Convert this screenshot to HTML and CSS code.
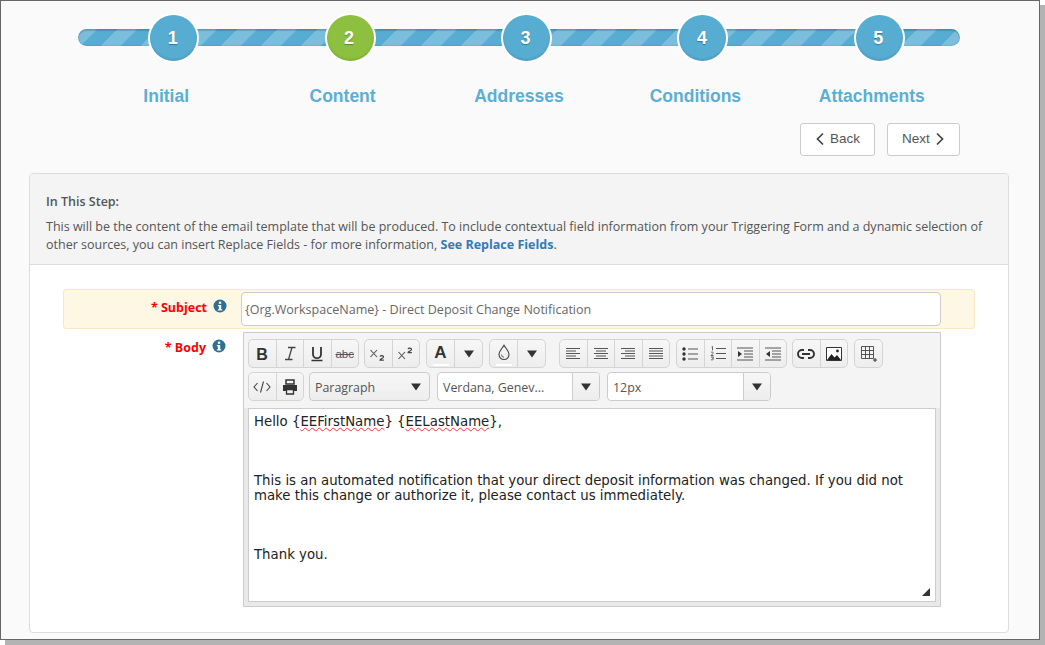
FILE: index.html
```html
<!DOCTYPE html>
<html lang="en">
<head>
<meta charset="utf-8">
<title>Email template - Content</title>
<link rel="stylesheet" href="styles.css">
</head>
<body>
<svg class="defs" width="0" height="0" aria-hidden="true">
  <symbol id="info" viewBox="0 0 14 14"><circle cx="7" cy="7" r="6.5" fill="#2f6f94"/><rect x="5.9" y="2.6" width="2.3" height="2.2" fill="#fff"/><path d="M4.9 6h3.3v4.2h1v1.2H4.900v-1.200h1V7.200h-1z" fill="#fff"/></symbol>
  <symbol id="caret" viewBox="0 0 10 8"><path d="M0 .5h10L5 7.500z" fill="#333"/></symbol>
</svg>
<div class="window">
  <div class="stepper">
    <div class="track"></div>
    <div class="step"><span class="dot">1</span><span class="step-label">Initial</span></div>
    <div class="step"><span class="dot dot-on">2</span><span class="step-label">Content</span></div>
    <div class="step"><span class="dot">3</span><span class="step-label">Addresses</span></div>
    <div class="step"><span class="dot">4</span><span class="step-label">Conditions</span></div>
    <div class="step"><span class="dot">5</span><span class="step-label">Attachments</span></div>
  </div>
  <div class="nav">
    <button class="nav-btn back" type="button"><svg width="10" height="14" viewBox="0 0 10 14"><path d="M8 1.500 2.500 7 8 12.500" fill="none" stroke="#444" stroke-width="1.700"/></svg>Back</button>
    <button class="nav-btn next" type="button">Next<svg width="10" height="14" viewBox="0 0 10 14"><path d="M2 1.500 7.500 7 2 12.500" fill="none" stroke="#444" stroke-width="1.700"/></svg></button>
  </div>
  <section class="panel">
    <header class="panel-head">
      <h2>In This Step:</h2>
      <p>This will be the content of the email template that will be produced. To include contextual field information from your Triggering Form and a dynamic selection of other sources, you can insert Replace Fields - for more information, <a href="#">See Replace Fields</a>.</p>
    </header>
    <div class="form">
      <div class="row row-subject">
        <label class="label">* Subject<svg class="info" width="14" height="14"><use href="#info"/></svg></label>
        <input class="subject" type="text" value="{Org.WorkspaceName} - Direct Deposit Change Notification">
      </div>
      <div class="row row-body">
        <label class="label">* Body<svg class="info" width="14" height="14"><use href="#info"/></svg></label>
        <div class="editor">
          <div class="toolbar">
            <div class="tool-row">
              <div class="group g-fmt">
                <span class="tb"><svg width="14" height="14" viewBox="0 0 14 14"><text x="7" y="12.500" class="gl gl-b">B</text></svg></span>
                <span class="tb"><svg width="14" height="15" viewBox="0 0 14 15"><path d="M5 1.500h7.500M2 13.500h7.500M9 1.500 5.500 13.500" fill="none" stroke="#444" stroke-width="1.300"/></svg></span>
                <span class="tb"><svg width="14" height="16" viewBox="0 0 14 16"><path d="M3 1v7.200a4 4 0 0 0 8 0V1" fill="none" stroke="#333" stroke-width="1.800"/><path d="M1.500 14.500h11" stroke="#333" stroke-width="1.500"/></svg></span>
                <span class="tb"><span class="abc">abc</span></span>
              </div>
              <div class="group g-script">
                <span class="tb"><svg width="18" height="14" viewBox="0 0 18 14"><path d="M1.500 3l6.500 7M8 3l-6.500 7" stroke="#555" stroke-width="1.100"/><path d="M11 9.500c.5-1.200 3.500-1.200 3.500.4 0 1.400-3.500 1.800-3.500 3.300h3.800" fill="none" stroke="#444" stroke-width="1.200"/></svg></span>
                <span class="tb"><svg width="18" height="14" viewBox="0 0 18 14"><path d="M1.500 5l6.500 7M8 5l-6.500 7" stroke="#555" stroke-width="1.100"/><path d="M11 2c.5-1.200 3.500-1.200 3.500.4 0 1.400-3.500 1.800-3.500 3.300h3.800" fill="none" stroke="#444" stroke-width="1.200"/></svg></span>
              </div>
              <div class="group g-color">
                <span class="tb tb-color"><span class="big-a">A</span><i class="swatch"></i></span>
                <span class="tb"><svg width="10" height="8"><use href="#caret"/></svg></span>
              </div>
              <div class="group g-color">
                <span class="tb tb-color"><svg width="14" height="17" viewBox="0 0 14 17"><path d="M7 1.200C5.500 4 2 7 2 10.500a5 5 0 0 0 10 0C12 7 8.500 4 7 1.200z" fill="none" stroke="#444" stroke-width="1.100"/><path d="M4.500 10.500a2.500 2.500 0 0 0 2.500 2.700" fill="none" stroke="#666"/></svg><i class="swatch"></i></span>
                <span class="tb"><svg width="10" height="8"><use href="#caret"/></svg></span>
              </div>
              <div class="group g-align">
                <span class="tb"><svg width="16" height="14" viewBox="0 0 16 14"><path class="ln" d="M1 1.500h14M1 4h10M1 6.500h14M1 9h10M1 11.500h14"/></svg></span>
                <span class="tb"><svg width="16" height="14" viewBox="0 0 16 14"><path class="ln" d="M1 1.500h14M3 4h10M1 6.500h14M3 9h10M1 11.500h14"/></svg></span>
                <span class="tb"><svg width="16" height="14" viewBox="0 0 16 14"><path class="ln" d="M1 1.500h14M5 4h10M1 6.500h14M5 9h10M1 11.500h14"/></svg></span>
                <span class="tb"><svg width="16" height="14" viewBox="0 0 16 14"><path class="ln" d="M1 1.500h14M1 4h14M1 6.500h14M1 9h14M1 11.500h14"/></svg></span>
              </div>
              <div class="group g-list">
                <span class="tb"><svg width="16" height="14" viewBox="0 0 16 14"><circle cx="2" cy="2" r="1.700" fill="#333"/><circle cx="2" cy="7" r="1.700" fill="#333"/><circle cx="2" cy="12" r="1.700" fill="#333"/><path class="ln" d="M6 2h10M6 7h10M6 12h10"/></svg></span>
                <span class="tb"><svg width="16" height="15" viewBox="0 0 16 15"><path d="M1.500 1 2.500.5v4M1 6.500c1-1 2.500-.5 2 1L1 9.500h2.500M1 11h2.500l-1 1.300c1.500 0 1.500 2-1.500 1.500" fill="none" stroke="#444" stroke-width=".8"/><path class="ln" d="M6 2.500h10M6 7.500h10M6 12.500h10"/></svg></span>
                <span class="tb"><svg width="16" height="14" viewBox="0 0 16 14"><path class="ln" d="M0 1h16M7 4h9M7 7h9M7 10h9M0 13h16"/><path d="M1 4v6l4-3z" fill="#333"/></svg></span>
                <span class="tb"><svg width="16" height="14" viewBox="0 0 16 14"><path class="ln" d="M0 1h16M7 4h9M7 7h9M7 10h9M0 13h16"/><path d="M5 4v6L1 7z" fill="#333"/></svg></span>
              </div>
              <div class="group g-insert">
                <span class="tb"><svg width="18" height="12" viewBox="0 0 18 12"><path d="M7 2H5a4 4 0 0 0 0 8h2M11 2h2a4 4 0 0 1 0 8h-2M5 6h8" fill="none" stroke="#333" stroke-width="1.900"/></svg></span>
                <span class="tb"><svg width="16" height="14" viewBox="0 0 16 14"><path d="M.5.500h15v13H.5z" fill="#fff" stroke="#333"/><path d="M1 13l4.500-6 3 3.500 2.500-2.500 4 5z" fill="#222"/><circle cx="11.500" cy="4" r="1.400" fill="#222"/></svg></span>
              </div>
              <div class="group g-table">
                <span class="tb"><svg width="16" height="16" viewBox="0 0 16 16"><path d="M.5.500h12v12H.5zM4.500.500v12M8.500.500v12M.5 4.500h12M.5 8.500h12" fill="none" stroke="#444" stroke-width=".9"/><path d="M14 12v4M12 14h4" stroke="#333"/></svg></span>
              </div>
            </div>
            <div class="tool-row">
              <div class="group g-code">
                <span class="tb"><svg width="18" height="14" viewBox="0 0 18 14"><path d="M4.500 3 1 7l3.500 4M13.500 3 17 7l-3.500 4M10.500 1.500l-3 11" fill="none" stroke="#444" stroke-width="1.100"/></svg></span>
                <span class="tb"><svg width="16" height="16" viewBox="0 0 16 16"><path d="M4 1h8v4H4z" fill="none" stroke="#333" stroke-width="1.500"/><path d="M1 6h14v6h-3v-2H4v2H1z" fill="#333"/><path d="M4.500 10.500h7v4.500h-7z" fill="none" stroke="#333" stroke-width="1.300"/></svg></span>
              </div>
              <div class="select sel-para"><span class="sel-text">Paragraph</span><svg width="10" height="8"><use href="#caret"/></svg></div>
              <div class="select sel-split sel-font"><span class="sel-text">Verdana, Genev...</span><span class="sel-btn"><svg width="10" height="8"><use href="#caret"/></svg></span></div>
              <div class="select sel-split sel-size"><span class="sel-text">12px</span><span class="sel-btn"><svg width="10" height="8"><use href="#caret"/></svg></span></div>
            </div>
          </div>
          <div class="content">
            <p>Hello {<span class="sp">EEFirstName</span>} {<span class="sp">EELastName</span>},</p>
            <p class="blank">&nbsp;</p>
            <p>This is an automated notification that your direct deposit information was changed. If you did not make this change or authorize it, please contact us immediately.</p>
            <p class="blank">&nbsp;</p>
            <p>Thank you.</p>
            <svg class="grip" width="8" height="8" viewBox="0 0 8 8"><path d="M8 0v8H0z" fill="#333"/></svg>
          </div>
        </div>
      </div>
    </div>
  </section>
</div>
</body>
</html>
```
FILE: styles.css
```css
* { box-sizing: border-box; }
html, body { margin: 0; padding: 0; background: #fff; }
body { font-family: "Open Sans", sans-serif; color: #555; width: 1045px; height: 645px; overflow: hidden; }
.defs { position: absolute; }

.window {
  width: 1040px;
  height: 640px;
  border: 1px solid #666;
  background: #fafafa;
  box-shadow: 5px 5px 0 #b3b3b3;
  padding: 13px 0 0 28px;
}

.stepper {
  position: relative;
  margin-left: 49px;
  width: 882px;
  height: 97px;
  display: grid;
  grid-template-columns: repeat(5, 1fr);
}
.track {
  position: absolute;
  left: 0; right: 0; top: 15px;
  height: 17px;
  border-radius: 9px;
  background-color: #56acd1;
  background-image: linear-gradient(135deg, rgba(255,255,255,.22) 25%, transparent 25%, transparent 50%, rgba(255,255,255,.22) 50%, rgba(255,255,255,.22) 75%, transparent 75%);
  background-size: 40px 40px;
  box-shadow: inset 0 2px 1px rgba(0,0,0,.14), inset 0 0 2px rgba(0,0,0,.2);
}
.step { position: relative; display: flex; flex-direction: column; align-items: center; }
.dot {
  width: 47px; height: 46px;
  margin: 1px 0 0 15px;
  padding-right: 2px;
  border-radius: 50%;
  background: #56acd1;
  box-shadow: 0 0 0 2px #fff, inset 0 -2px 2px rgba(0,0,0,.08);
  color: #fff;
  font: bold 18px/46px "Liberation Sans", sans-serif;
  text-align: center;
  text-shadow: 0 1px 1px rgba(0,0,0,.3);
}
.dot-on { background: #8cc03e; }
.step-label {
  margin-top: 23px;
  font: bold 17.500px/24px "Liberation Sans", sans-serif;
  color: #5bafd4;
}

.nav { display: flex; gap: 12px; margin-left: 771px; margin-top: 12px; }
.nav-btn {
  display: flex; align-items: center; justify-content: center; gap: 5px;
  height: 33px;
  padding: 0 0 2px;
  background: #fff;
  border: 1px solid #ccc;
  border-radius: 3px;
  font: 13.500px "Liberation Sans", sans-serif;
  color: #555;
}
.back { width: 75px; }
.next { width: 73px; }

.panel {
  width: 980px;
  height: 460px;
  margin-top: 17px;
  background: #fff;
  border: 1px solid #ddd;
  border-radius: 4px;
}
.panel-head {
  height: 91px;
  padding: 20px 16px 0;
  background: #f4f4f4;
  border-bottom: 1px solid #ddd;
  border-radius: 3px 3px 0 0;
  font-size: 12.500px;
  line-height: 18px;
  color: #555;
}
.panel-head h2 { margin: 0 0 8px; font-size: 12.500px; line-height: 16px; font-weight: 600; }
.panel-head p { margin: 0; }
.panel-head a { color: #337ab7; font-weight: 700; text-decoration: none; }

.form { padding: 24px 33px 0; }
.row { display: grid; grid-template-columns: 178px 1fr; }
.row-subject {
  height: 40px;
  align-items: center;
  grid-template-columns: 177px 1fr;
  background: #fdf7e3;
  border: 1px solid #f6e9c4;
  border-radius: 3px;
  padding-right: 33px;
}
.label {
  display: flex; justify-content: flex-end; align-items: center; gap: 6px;
  margin-right: 14px;
  color: #f00;
  font-size: 12.500px;
  font-weight: 700;
  height: 16px;
}
.row-subject .label { margin-top: -4px; }
.info { flex: none; margin-top: -2px; }
.subject {
  width: 700px;
  height: 34px;
  padding: 0 3px;
  border: 1px solid #ccc;
  border-radius: 4px;
  background: #fff;
  font: 12.550px "Open Sans", sans-serif;
  color: #666;
}
.row-body { margin-top: 3px; }
.row-body .label { margin-top: 7px; margin-right: 15px; }
.editor {
  width: 698px;
  height: 275px;
  margin-left: 2px;
  padding: 6px 4px 4px;
  border: 1px solid #ccc;
  background: linear-gradient(#f4f4f4 75px, #e9e9e9 75px);
  display: flex;
  flex-direction: column;
}
.toolbar { display: flex; flex-direction: column; gap: 4px; height: 69px; }
.tool-row { display: flex; height: 29px; }
.group {
  display: flex;
  height: 29px;
  margin-right: 6px;
  border: 1px solid #d4d4d4;
  border-radius: 5px;
  background: linear-gradient(#f7f7f7, #ededed);
}
.tb {
  flex: 1;
  display: flex; align-items: center; justify-content: center; position: relative;
  border-left: 1px solid #d4d4d4;
}
.tb:first-child { border-left: 0; }
.g-fmt { width: 111px; margin-right: 5px; }
.g-script { width: 56px; }
.g-color { width: 57px; }
.g-color + .g-color { margin-right: 13px; }
.g-align { width: 111px; }
.g-list { width: 111px; margin-right: 5px; }
.g-insert { width: 56px; }
.g-table { width: 29px; margin-right: 0; }
.g-code { width: 56px; margin-right: 5px; }
.tb-color { padding-bottom: 2px; }
.swatch { position: absolute; left: 6px; right: 5px; bottom: 1px; height: 2px; background: #fff; }
.gl { font: bold 16px "Liberation Sans", sans-serif; text-anchor: middle; fill: #333; }
.abc { font: 11.500px "Liberation Sans", sans-serif; color: #555; text-decoration: line-through; }
.big-a { font: bold 17px "Liberation Sans", sans-serif; color: #333; }
.ln { fill: none; stroke: #555; stroke-width: 1.200; }

.select {
  display: flex; align-items: center;
  height: 29px;
  border: 1px solid #ccc;
  border-radius: 4px;
  font-size: 12.400px;
  color: #555;
}
.sel-text { flex: 1; padding: 2px 0 0 5px; }
.sel-para { width: 121px; margin-right: 7px; padding-right: 8px; background: linear-gradient(#f7f7f7, #ededed); }
.sel-split { background: #fff; }
.sel-font { width: 163px; margin-right: 7px; }
.sel-size { width: 164px; }
.sel-btn {
  width: 27px; height: 27px;
  display: flex; align-items: center; justify-content: center;
  border-left: 1px solid #ccc;
  border-radius: 0 3px 3px 0;
  background: linear-gradient(#f7f7f7, #ededed);
}

.content {
  position: relative;
  flex: 1;
  padding: 5px 5px 0;
  background: #fff;
  border: 1px solid #ccc;
  font: 13.300px/15px "DejaVu Sans", Verdana, sans-serif;
  color: #222;
}
.content p { margin: 0 0 14.500px; }
.sp { text-decoration: underline wavy #e33 1px; text-underline-offset: 1px; }
.grip { position: absolute; right: 5px; bottom: 5px; }
```
